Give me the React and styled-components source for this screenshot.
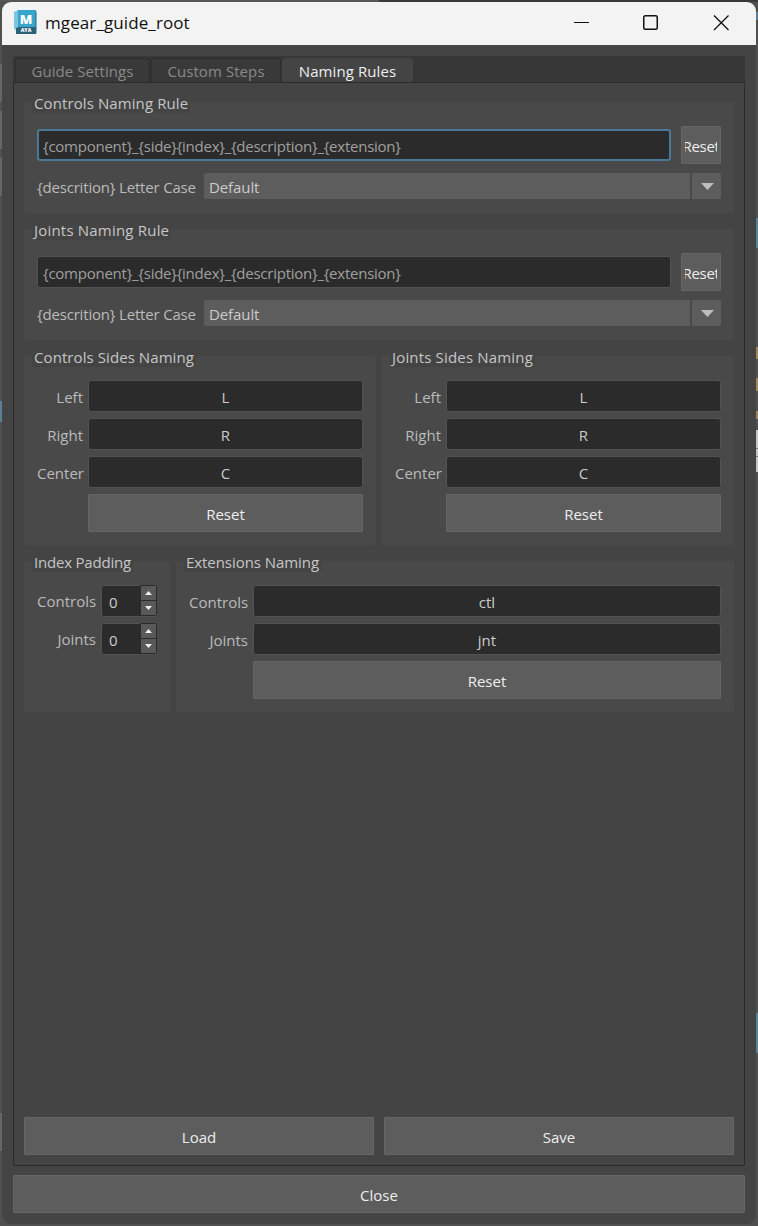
import React from "react";
import styled, { createGlobalStyle } from "styled-components";

const GlobalStyle = createGlobalStyle`
  * { box-sizing: border-box; }
  body { margin: 0; background: #535353; }
  button, input { font: inherit; }
`;

const Desktop = styled.div`
  width: 758px;
  height: 1226px;
  padding: 2px;
  overflow: hidden;
  font-family: "Open Sans", "Noto Sans", sans-serif;
  font-size: 15px;
  line-height: 20px;
  color: #c6c6c6;
  background:
    linear-gradient(#5b7f97, #5b7f97) 0 401px / 2px 21px no-repeat,
    linear-gradient(#666, #666) 0 64px / 2px 38px no-repeat,
    linear-gradient(#666, #666) 0 111px / 2px 38px no-repeat,
    linear-gradient(#666, #666) 0 158px / 2px 38px no-repeat,
    linear-gradient(#666, #666) 0 1113px / 2px 38px no-repeat,
    linear-gradient(#5b7f97, #5b7f97) 756px 12px / 2px 8px no-repeat,
    linear-gradient(#5b7f97, #5b7f97) 756px 218px / 2px 30px no-repeat,
    linear-gradient(#5b7f97, #5b7f97) 756px 1013px / 2px 40px no-repeat,
    linear-gradient(#a08560, #a08560) 756px 347px / 2px 12px no-repeat,
    linear-gradient(#a08560, #a08560) 756px 378px / 2px 13px no-repeat,
    linear-gradient(#a08560, #a08560) 756px 411px / 2px 8px no-repeat,
    linear-gradient(#777, #777) 756px 448px / 2px 1px no-repeat,
    linear-gradient(#777, #777) 756px 456px / 2px 1px no-repeat,
    linear-gradient(#c4c4c4, #c4c4c4) 756px 430px / 2px 42px no-repeat,
    linear-gradient(90deg, #555 50%, #3a3a3a 50%) 0 0 / 758px 2px no-repeat,
    #505050;
`;

const Window = styled.div`
  display: flex;
  flex-direction: column;
  width: 754px;
  height: 1222px;
  border-radius: 9px;
  overflow: hidden;
  background: #444;
`;

const TitleBar = styled.header`
  display: flex;
  align-items: center;
  height: 43px;
  padding: 0 27px 3px 12px;
  background: #f3f3f3;
  color: #111;
`;

const AppTitle = styled.h1`
  flex: 1;
  margin: 0 0 0 8px;
  padding-top: 2px;
  font-size: 17px;
  font-weight: 400;
  line-height: 24px;
  letter-spacing: 0.1px;
`;

const WindowButtons = styled.div`
  display: flex;
  gap: 54px;
`;

const Body = styled.main`
  flex: 1;
  display: flex;
  flex-direction: column;
  gap: 9px;
  padding: 11px;
`;

const TabWidget = styled.section`
  flex: 1;
  display: flex;
  flex-direction: column;
`;

const TabBar = styled.nav`
  display: flex;
  align-items: stretch;
  gap: 1px;
  height: 26px;
  padding: 2px 2px 0;
  background: #373737;
`;

const Tab = styled.div`
  width: ${(p) => p.$w}px;
  height: 24px;
  padding-top: 2px;
  text-align: center;
  letter-spacing: 0.08px;
  border-radius: 3px 3px 0 0;
  border: 1px solid ${(p) => (p.$active ? "#444" : "#2d2d2d")};
  border-width: 1px 1px 0 1px;
  background: ${(p) => (p.$active ? "#444" : "#393939")};
  color: ${(p) => (p.$active ? "#eee" : "#898989")};
`;

const Panel = styled.div`
  flex: 1;
  display: flex;
  flex-direction: column;
  justify-content: space-between;
  padding: 19px 10px 10px;
  border: 1px solid #2b2b2b;
`;

const Groups = styled.div`
  display: flex;
  flex-direction: column;
  gap: 16px;
`;

const GroupRow = styled.div`
  display: flex;
  gap: ${(p) => p.$gap || 6}px;
`;

const Group = styled.section`
  flex: ${(p) => (p.$w ? `0 0 ${p.$w}px` : "1")};
  display: flex;
  flex-direction: column;
  min-height: ${(p) => p.$h}px;
  padding: 0 13px;
  border-radius: 2px;
  background: #494949;
`;

const GroupTitle = styled.h2`
  align-self: flex-start;
  flex: none;
  height: 21px;
  margin: -10px 0 0 -5px;
  padding: 0 2px;
  font-size: 15px;
  font-weight: 400;
  line-height: 22px;
  letter-spacing: ${(p) => p.$ls || 0}px;
  white-space: nowrap;
  background: #444;
`;

const RuleRow = styled.div`
  display: flex;
  align-items: center;
  gap: 10px;
  margin-top: 13px;
`;

const CaseRow = styled.label`
  display: flex;
  margin-top: 9px;
  height: 26px;
  color: #bbb;
`;

const CaseText = styled.span`
  width: 167px;
  line-height: 28px;
  letter-spacing: -0.18px;
  white-space: nowrap;
`;

const Field = styled.input`
  flex: 1;
  min-width: 0;
  width: 100%;
  height: 32px;
  padding: 1px 4px 0;
  border: ${(p) => (p.$focused ? "2px solid #4a7896" : "1px solid #525252")};
  padding-left: ${(p) => (p.$rule && !p.$focused ? 5 : 4)}px;
  border-radius: 3px;
  outline: none;
  background: #2b2b2b;
  color: ${(p) => (p.$rule ? "#a0a0a0" : "#ccc")};
  letter-spacing: ${(p) => (p.$rule ? -0.245 : 0)}px;
  text-align: ${(p) => (p.$rule ? "left" : "center")};
`;

const Button = styled.button`
  flex: ${(p) => (p.$w ? `0 0 ${p.$w}px` : "1")};
  height: 38px;
  min-height: 38px;
  padding: 1px 3px 0;
  overflow: hidden;
  border: 1px solid #656565;
  border-radius: 1px;
  background: #5d5d5d;
  color: #eee;
`;

const Clip = styled.span`
  display: flex;
  justify-content: center;
  overflow: hidden;
  letter-spacing: -0.3px;
`;

const Combo = styled.div`
  flex: 1;
  display: flex;
  gap: 2px;
  border-radius: 2px;
  overflow: hidden;
  color: #ccc;
`;

const ComboValue = styled.div`
  flex: 1;
  padding-left: 5px;
  line-height: 28px;
  letter-spacing: -0.1px;
  background: #5d5d5d;
`;

const ComboArrow = styled.div`
  display: flex;
  align-items: center;
  justify-content: center;
  width: 29px;
  padding-left: 2px;
  background: #5d5d5d;
`;

const FormGrid = styled.div`
  display: grid;
  grid-template-columns: ${(p) => p.$label}px 1fr;
  row-gap: 6px;
  margin-top: 13px;
`;

const FormLabel = styled.label`
  height: 32px;
  padding-right: 5px;
  line-height: ${(p) => p.$lh || 34}px;
  text-align: right;
  color: #bbb;
`;

const FormReset = styled.div`
  grid-column: 2;
  display: flex;
`;

const Spin = styled.div`
  display: flex;
  height: 32px;
  border: 1px solid #525252;
  border-radius: 3px;
  background: #2b2b2b;
  color: #ccc;
`;

const SpinValue = styled.span`
  flex: 1;
  padding-left: 7px;
  line-height: 33px;
`;

const SpinButtons = styled.div`
  display: flex;
  flex-direction: column;
  gap: 1px;
  width: 17px;
  margin: -1px -1px 0 0;
  padding: 1px;
  border-radius: 0 3px 3px 0;
  background: #2b2b2b;
`;

const SpinStep = styled.div`
  flex: 1;
  display: flex;
  align-items: center;
  justify-content: center;
  background: #595959;
`;

const MayaIcon = () => (
  <svg width="23" height="24" viewBox="0 0 23 24">
    <path d="M0 2 4 0v19l-2.500 1L0 18.500z" fill="#7cc4e0" />
    <path d="M4 0h18v18H4z" fill="#38a5cc" />
    <path d="M2 18l3-1H22V24H2z" fill="#2d6079" />
    <path d="M21.500 1l1 1v21l-1 1z" fill="#246a8a" />
    <text x="12" y="13.500" textAnchor="middle" fontFamily="Open Sans, sans-serif" fontSize="13" fontWeight="800" fill="#fff">M</text>
    <text x="12" y="22.300" textAnchor="middle" fontFamily="Open Sans, sans-serif" fontSize="5" fontWeight="800" fill="#fff">AYA</text>
  </svg>
);

const Triangle = ({ w, h, up, fill }) => (
  <svg width={w} height={h} viewBox={`0 0 ${w} ${h}`}>
    <path d={up ? `M0 ${h}L${w / 2} 0L${w} ${h}z` : `M0 0H${w}L${w / 2} ${h}z`} fill={fill} />
  </svg>
);

const NamingRule = ({ title, ls, focused }) => (
  <Group $h={111}>
    <GroupTitle $ls={ls}>{title}</GroupTitle>
    <RuleRow>
      <Field $rule $focused={focused} readOnly value="{component}_{side}{index}_{description}_{extension}" />
      <Button $w={40}><Clip>Reset</Clip></Button>
    </RuleRow>
    <CaseRow>
      <CaseText>{"{descrition} Letter Case"}</CaseText>
      <Combo>
        <ComboValue>Default</ComboValue>
        <ComboArrow><Triangle w={13} h={7} fill="#bdbdbd" /></ComboArrow>
      </Combo>
    </CaseRow>
  </Group>
);

const FieldForm = ({ title, ls, rows, label, h }) => (
  <Group $h={h}>
    <GroupTitle $ls={ls}>{title}</GroupTitle>
    <FormGrid $label={label}>
      {rows.map(([name, value]) => (
        <React.Fragment key={name}>
          <FormLabel>{name}</FormLabel>
          <Field readOnly value={value} />
        </React.Fragment>
      ))}
      <FormReset><Button>Reset</Button></FormReset>
    </FormGrid>
  </Group>
);

const SpinBox = ({ name }) => (
  <>
    <FormLabel $lh={32}>{name}</FormLabel>
    <Spin>
      <SpinValue>0</SpinValue>
      <SpinButtons>
        <SpinStep><Triangle w={7} h={4} up fill="#eee" /></SpinStep>
        <SpinStep><Triangle w={7} h={4} fill="#eee" /></SpinStep>
      </SpinButtons>
    </Spin>
  </>
);

const sides = [["Left", "L"], ["Right", "R"], ["Center", "C"]];

export default function App() {
  return (
    <Desktop>
      <GlobalStyle />
      <Window>
        <TitleBar>
          <MayaIcon />
          <AppTitle>mgear_guide_root</AppTitle>
          <WindowButtons>
            <svg width="15" height="16"><path d="M0 8.500H15" stroke="#111" /></svg>
            <svg width="16" height="16"><rect x=".75" y="1.750" width="13.500" height="13.500" rx="1.500" fill="none" stroke="#111" strokeWidth="1.500" /></svg>
            <svg width="16" height="17"><path d="M1 1.500l14.500 14.500M15.500 1.500l-14.500 14.500" stroke="#111" strokeWidth="1.300" /></svg>
          </WindowButtons>
        </TitleBar>
        <Body>
          <TabWidget>
            <TabBar>
              <Tab $w={135}>Guide Settings</Tab>
              <Tab $w={130}>Custom Steps</Tab>
              <Tab $w={131} $active>Naming Rules</Tab>
            </TabBar>
            <Panel>
              <Groups>
                <NamingRule title="Controls Naming Rule" ls={0.1} focused />
                <NamingRule title="Joints Naming Rule" ls={0.2} />
                <GroupRow>
                  <FieldForm title="Controls Sides Naming" ls={0.08} rows={sides} label={51} h={189} />
                  <FieldForm title="Joints Sides Naming" ls={0.17} rows={sides} label={51} h={189} />
                </GroupRow>
                <GroupRow>
                  <Group $w={146} $h={151}>
                    <GroupTitle $ls={-0.2}>Index Padding</GroupTitle>
                    <FormGrid $label={64}>
                      <SpinBox name="Controls" />
                      <SpinBox name="Joints" />
                    </FormGrid>
                  </Group>
                  <FieldForm title="Extensions Naming" ls={-0.06} rows={[["Controls", "ctl"], ["Joints", "jnt"]]} label={64} h={151} />
                </GroupRow>
              </Groups>
              <GroupRow $gap={10}>
                <Button>Load</Button>
                <Button>Save</Button>
              </GroupRow>
            </Panel>
          </TabWidget>
          <GroupRow><Button>Close</Button></GroupRow>
        </Body>
      </Window>
    </Desktop>
  );
}
